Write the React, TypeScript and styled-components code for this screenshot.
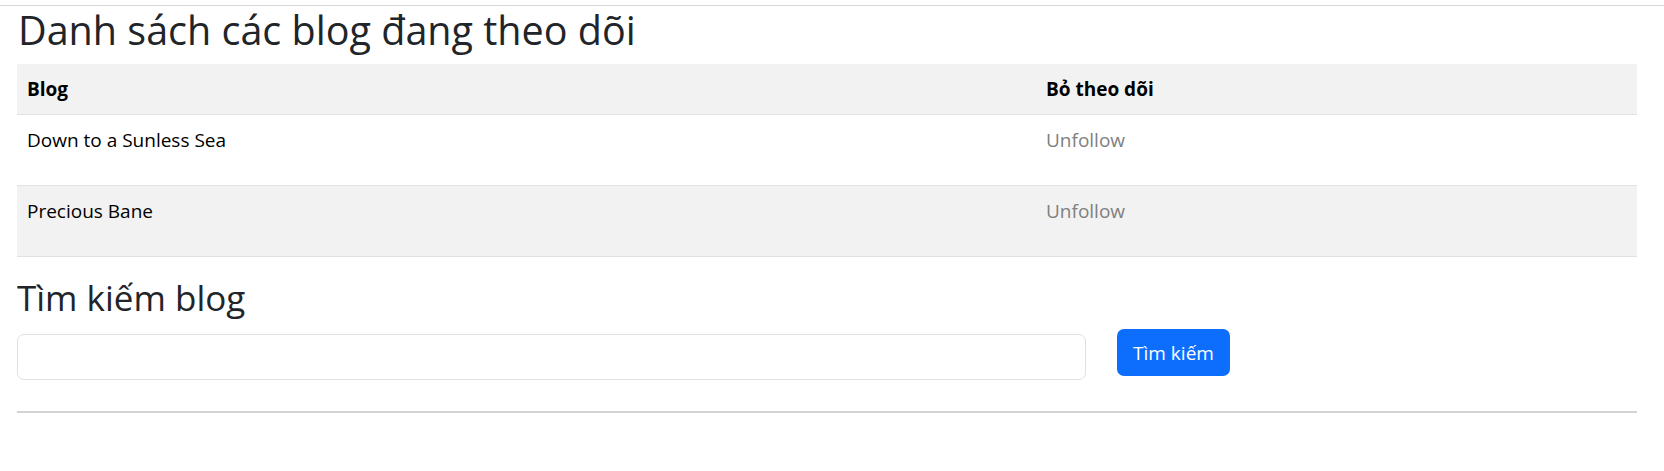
import React, { useState } from 'react';
import styled, { createGlobalStyle } from 'styled-components';

interface FollowedBlog {
  id: number;
  title: string;
}

const followed: FollowedBlog[] = [
  { id: 1, title: 'Down to a Sunless Sea' },
  { id: 2, title: 'Precious Bane' },
];

const GlobalStyle = createGlobalStyle`
  body {
    margin: 0;
    background: #fff;
    color: #212529;
    font-family: "Open Sans", "Noto Sans", sans-serif;
    font-size: 19px;
  }
`;

const App: React.FC = () => {
  const [keyword, setKeyword] = useState('');

  return (
    <>
      <GlobalStyle />
      <TopRule />
      <Page>
        <Title>Danh sách các blog đang theo dõi</Title>
        <BlogTable>
          <colgroup>
            <BlogCol />
            <col />
          </colgroup>
          <thead>
            <HeadRow>
              <HeadCell>Blog</HeadCell>
              <HeadCell>Bỏ theo dõi</HeadCell>
            </HeadRow>
          </thead>
          <tbody>
            {followed.map((blog, index) => (
              <BodyRow key={blog.id} striped={index % 2 === 1}>
                <Cell>
                  <CellText>{blog.title}</CellText>
                </Cell>
                <Cell>
                  <UnfollowLink href="#">Unfollow</UnfollowLink>
                </Cell>
              </BodyRow>
            ))}
          </tbody>
        </BlogTable>

        <SubTitle>Tìm kiếm blog</SubTitle>
        <SearchRow>
          <SearchInput value={keyword} onChange={(e) => setKeyword(e.target.value)} />
          <SearchButton type="button">Tìm kiếm</SearchButton>
        </SearchRow>
        <BottomRule />
      </Page>
    </>
  );
};

const TopRule = styled.div`
  height: 1px;
  margin-top: 5px;
  background: #d6d6d6;
`;

const Page = styled.div`
  margin: 0 27px 0 17px;
`;

const Title = styled.h2`
  margin: 0 0 10px 1px;
  font-size: 39.5px;
  font-weight: 500;
  line-height: 48px;
  color: #212529;
`;

const BlogTable = styled.table`
  width: 100%;
  table-layout: fixed;
  border-collapse: collapse;
  margin-bottom: 21px;
`;

const BlogCol = styled.col`
  width: 1019px;
`;

const HeadRow = styled.tr`
  background: #f2f2f2;
`;

const HeadCell = styled.th`
  padding: 10px;
  text-align: left;
  font-weight: 700;
  line-height: 30px;
  color: #000;
  border-bottom: 1px solid #dee2e6;
`;

const BodyRow = styled.tr<{ striped: boolean }>`
  background: ${(p) => (p.striped ? '#f2f2f2' : '#fff')};
`;

const Cell = styled.td`
  padding: 10px;
  vertical-align: top;
  line-height: 30px;
  border-bottom: 1px solid #dee2e6;
`;

const CellText = styled.p`
  margin: 0 0 20px;
  color: #000;
`;

const UnfollowLink = styled.a`
  display: block;
  margin-bottom: 20px;
  color: #808080;
  text-decoration: none;
`;

const SubTitle = styled.h3`
  margin: 0 0 11px;
  font-size: 35px;
  font-weight: 500;
  line-height: 40px;
  color: #212529;
`;

const SearchRow = styled.div`
  display: flex;
  align-items: flex-start;
`;

const SearchInput = styled.input`
  box-sizing: border-box;
  width: 1069px;
  height: 46px;
  margin-top: 5px;
  padding: 0 15px;
  border: 1px solid #dee2e6;
  border-radius: 7px;
  font: inherit;
  outline: none;
`;

const SearchButton = styled.button`
  box-sizing: border-box;
  width: 113px;
  height: 47px;
  margin-left: 31px;
  border: none;
  border-radius: 7px;
  background: #0d6efd;
  color: #fff;
  font: inherit;
  cursor: pointer;
`;

const BottomRule = styled.div`
  height: 2px;
  margin-top: 31px;
  background: #d3d3d3;
`;

export default App;
